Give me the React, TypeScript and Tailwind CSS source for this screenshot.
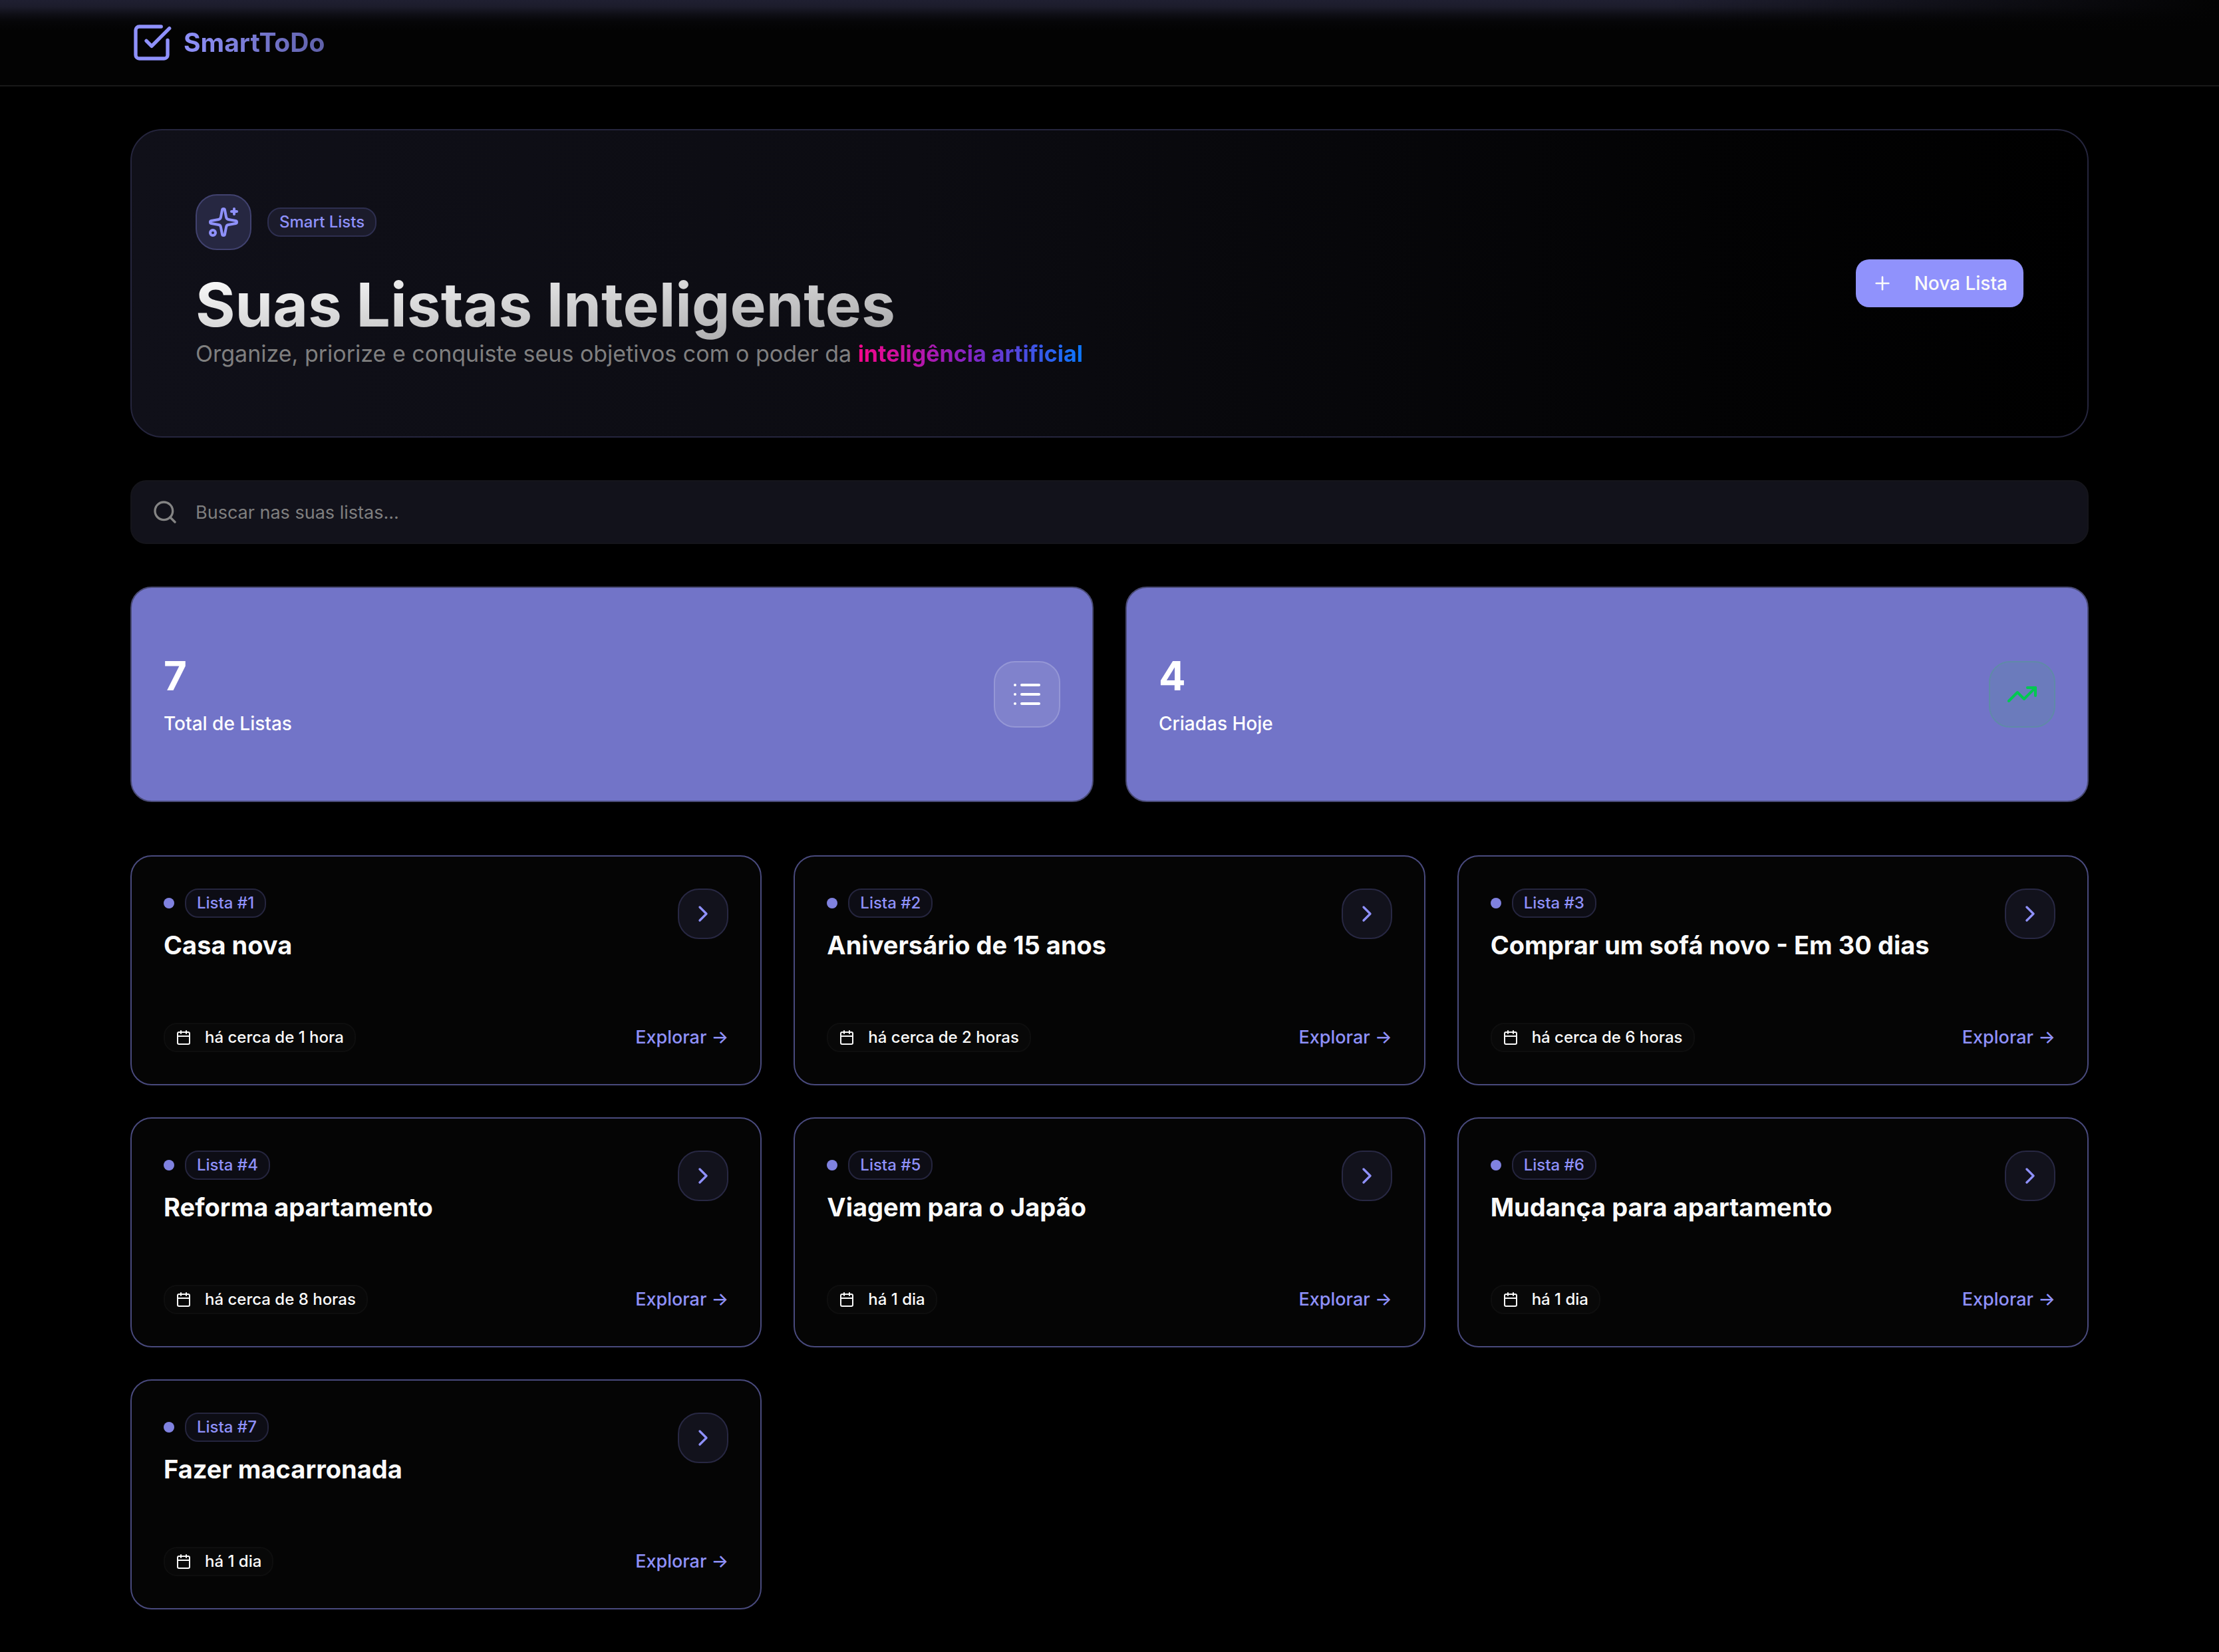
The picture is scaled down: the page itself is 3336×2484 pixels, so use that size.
import {
  Calendar,
  ChevronRight,
  List,
  Plus,
  Search,
  Sparkles,
  SquareCheckBig,
  TrendingUp,
} from "lucide-react";

const lists = [
  { id: 1, title: "Casa nova", created: "há cerca de 1 hora" },
  { id: 2, title: "Aniversário de 15 anos", created: "há cerca de 2 horas" },
  { id: 3, title: "Comprar um sofá novo - Em 30 dias", created: "há cerca de 6 horas" },
  { id: 4, title: "Reforma apartamento", created: "há cerca de 8 horas" },
  { id: 5, title: "Viagem para o Japão", created: "há 1 dia" },
  { id: 6, title: "Mudança para apartamento", created: "há 1 dia" },
  { id: 7, title: "Fazer macarronada", created: "há 1 dia" },
];

function Header() {
  return (
    <header className="border-b-2 border-[#191919] bg-[#030303] bg-[linear-gradient(to_right,transparent_75%,#030303),linear-gradient(to_bottom,#1f1f31_0px,#1c1c2b_10px,#0e0e15_22px,#060608_32px,#030303_46px)]">
      <div className="mx-auto flex h-32 max-w-[3072px] items-center px-16">
        <a href="#" className="flex items-center gap-4">
          <SquareCheckBig className="size-16 text-[#8f91fb]" />
          <span className="bg-[linear-gradient(to_right,#8f91fb,#5f60a8)] bg-clip-text text-[39px] leading-14 font-bold text-transparent">
            SmartToDo
          </span>
        </a>
      </div>
    </header>
  );
}

function Hero() {
  return (
    <section className="flex items-center justify-between rounded-[48px] border-2 border-[#25253d] bg-[linear-gradient(to_right,#101019,#0c0c12_40%,#030304_80%,#000)] p-24">
      <div>
        <div className="flex items-center gap-6">
          <div className="rounded-[32px] border-2 border-[#41426f] bg-[#262741] p-4">
            <Sparkles className="size-12 text-[#8f91fb]" />
          </div>
          <span className="rounded-[20px] border-2 border-[#2e2f50] bg-[#1b1b2b] px-4 text-2xl leading-10 font-medium text-[#8f91fb]">
            Smart Lists
          </span>
        </div>
        <h1 className="mt-8 -mb-2 w-fit bg-[linear-gradient(to_bottom_right,#ffffff,#a4a4a6)] bg-clip-text pb-1 text-[91px] leading-25 font-bold text-transparent">
          Suas Listas Inteligentes
        </h1>
        <p className="text-[34px] leading-14 text-[#7f7f7f]">
          Organize, priorize e conquiste seus objetivos com o poder da{" "}
          <span className="bg-[linear-gradient(to_right,#f6058a,#8224c4_50%,#0a78ff)] bg-clip-text font-bold text-transparent">
            inteligência artificial
          </span>
        </p>
      </div>
      <button
        type="button"
        className="flex h-18 items-center gap-8 rounded-[20px] bg-[#9092fc] px-6 text-[28px] font-medium text-[#fafafa]"
      >
        <Plus className="size-8" />
        Nova Lista
      </button>
    </section>
  );
}

function SearchBox() {
  return (
    <div className="relative mt-16">
      <Search className="absolute top-7 left-8 size-10 text-[#848484]" />
      <input
        type="search"
        aria-label="Buscar nas suas listas"
        placeholder="Buscar nas suas listas..."
        className="block h-24 w-full rounded-3xl border-2 border-[#15151b] bg-[#12121b] pr-8 pl-24 text-[27px] text-white placeholder:text-[#7f7f7f]"
      />
    </div>
  );
}

function Stats() {
  return (
    <section className="mt-16 grid grid-cols-2 gap-12 text-white">
      <div className="flex h-81 items-center justify-between rounded-[32px] border-2 border-[#494a75] bg-[#7274c8] px-12">
        <div className="flex flex-col gap-4">
          <strong className="text-6xl leading-18 font-bold">7</strong>
          <span className="text-[28px] leading-10 font-medium">Total de Listas</span>
        </div>
        <div className="rounded-[32px] border-2 border-[#9597d6] bg-[#8082cc] p-6">
          <List className="size-12" />
        </div>
      </div>
      <div className="flex h-81 items-center justify-between rounded-[32px] border-2 border-[#494a75] bg-[#7274c8] px-12">
        <div className="flex flex-col gap-4">
          <strong className="text-6xl leading-18 font-bold">4</strong>
          <span className="text-[28px] leading-10 font-medium">Criadas Hoje</span>
        </div>
        <div className="rounded-[32px] border-2 border-[#5f8aa8] bg-[#6b7bbc] p-6">
          <TrendingUp className="size-12 text-[#00c950]" />
        </div>
      </div>
    </section>
  );
}

function ListCard({ id, title, created }: { id: number; title: string; created: string }) {
  return (
    <article className="flex h-[346px] flex-col justify-between rounded-[32px] border-2 border-[#494a7d] bg-[#050505] p-12">
      <div className="flex items-start justify-between">
        <div>
          <div className="flex items-center gap-4">
            <span className="size-4 rounded-full bg-[#8082e0]" />
            <span className="rounded-[20px] border-2 border-[#25253e] bg-[#0d0d15] px-4 text-2xl leading-10 font-medium text-[#8f91fb]">
              Lista #{id}
            </span>
          </div>
          <h2 className="mt-4 text-[38px] leading-[50px] font-bold text-[#fafafa]">{title}</h2>
        </div>
        <button
          type="button"
          aria-label={`Abrir ${title}`}
          className="rounded-[32px] border-2 border-[#282843] bg-[#12121c] p-4 text-[#8f91fb]"
        >
          <ChevronRight className="size-10" />
        </button>
      </div>
      <div className="flex items-center justify-between">
        <span className="flex items-center gap-5 rounded-[20px] border-2 border-[#0e0e0e] bg-[#080808] px-4 text-2xl leading-10 font-medium text-[#fafafa]">
          <Calendar className="size-6" />
          {created}
        </span>
        <a href={`#lista-${id}`} className="text-[27px] leading-10 font-medium text-[#8f91fb]">
          Explorar →
        </a>
      </div>
    </article>
  );
}

export default function App() {
  return (
    <div className="min-h-screen bg-black pb-16 font-['Inter',sans-serif]">
      <Header />
      <main className="mx-auto max-w-[3072px] px-16 pt-16">
        <Hero />
        <SearchBox />
        <Stats />
        <section className="mt-20 grid grid-cols-3 gap-12">
          {lists.map((list) => (
            <ListCard key={list.id} {...list} />
          ))}
        </section>
      </main>
    </div>
  );
}
